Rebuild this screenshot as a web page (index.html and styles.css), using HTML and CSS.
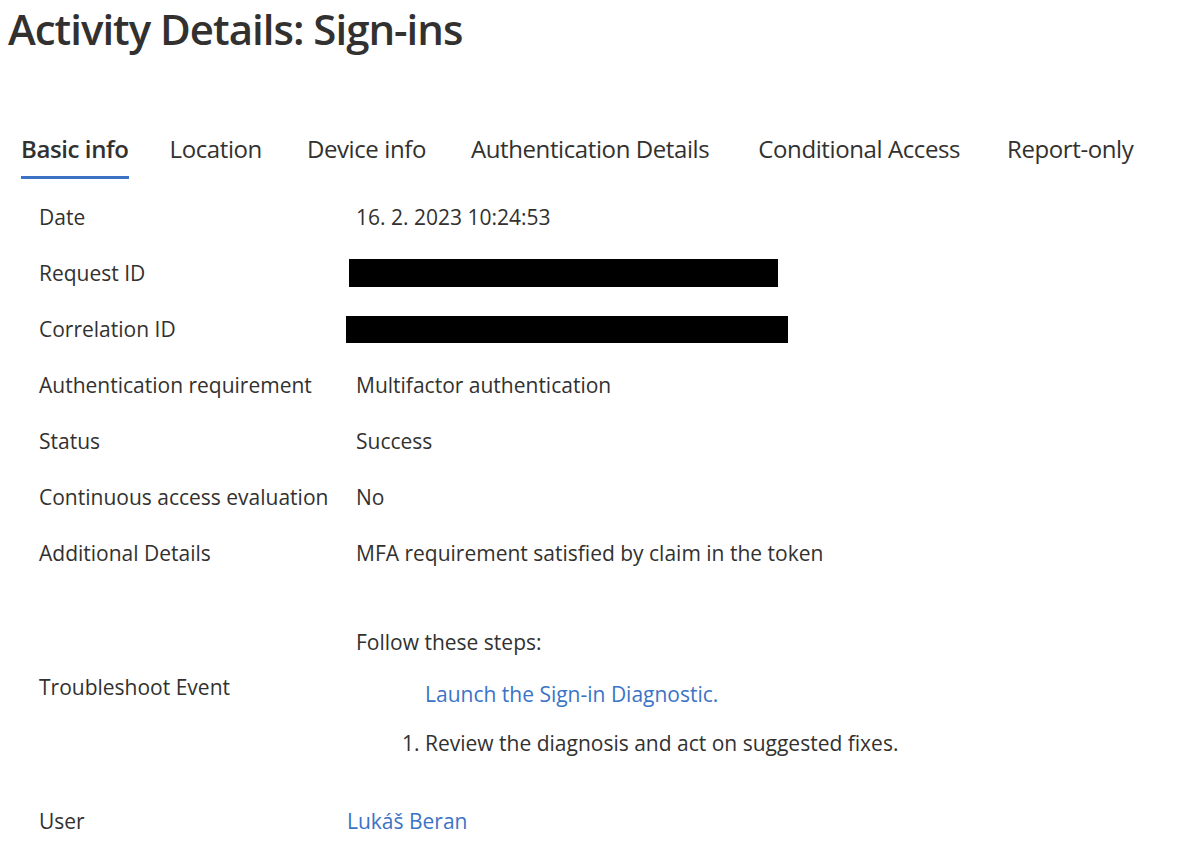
FILE: index.html
```html
<!DOCTYPE html>
<html lang="en">
<head>
<meta charset="utf-8">
<title>Activity Details: Sign-ins</title>
<link rel="stylesheet" href="styles.css">
</head>
<body>
<div class="page">
  <h1 class="title">Activity Details: Sign-ins</h1>
  <nav class="tabs">
    <span class="tab tab-basic active">Basic info</span>
    <span class="tab">Location</span>
    <span class="tab">Device info</span>
    <span class="tab tab-auth">Authentication Details</span>
    <span class="tab tab-cond">Conditional Access</span>
    <span class="tab">Report-only</span>
  </nav>
  <div class="details">
    <div class="row"><div class="label">Date</div><div class="value">16. 2. 2023 10:24:53</div></div>
    <div class="row"><div class="label">Request ID</div><div class="value"><span class="redact redact-req"></span></div></div>
    <div class="row"><div class="label">Correlation ID</div><div class="value"><span class="redact redact-corr"></span></div></div>
    <div class="row"><div class="label">Authentication requirement</div><div class="value">Multifactor authentication</div></div>
    <div class="row"><div class="label">Status</div><div class="value">Success</div></div>
    <div class="row"><div class="label">Continuous access evaluation</div><div class="value">No</div></div>
    <div class="row"><div class="label">Additional Details</div><div class="value">MFA requirement satisfied by claim in the token</div></div>
    <div class="row troubleshoot">
      <div class="label">Troubleshoot Event</div>
      <div class="value steps">
        <div class="steps-head">Follow these steps:</div>
        <a class="link launch" href="#">Launch the Sign-in Diagnostic.</a>
        <ol class="step-list"><li>Review the diagnosis and act on suggested fixes.</li></ol>
      </div>
    </div>
    <div class="row user-row"><div class="label">User</div><div class="value user"><a class="link" href="#">Lukáš Beran</a></div></div>
  </div>
</div>
</body>
</html>
```
FILE: styles.css
```css
html, body {
  margin: 0;
  padding: 0;
  background: #ffffff;
}
body {
  font-family: "Open Sans", "Noto Sans", sans-serif;
  color: #323130;
}
.page {
  padding: 0 0 0 8px;
}
.title {
  margin: 0;
  padding-top: 1px;
  font-size: 42px;
  font-weight: 600;
  line-height: 56px;
  letter-spacing: -1px;
  color: #323130;
}
.tabs {
  display: flex;
  gap: 45px;
  margin-top: 76px;
  padding-left: 13px;
  font-size: 24px;
}
.tab {
  line-height: 32px;
  padding-bottom: 11px;
  border-bottom: 3px solid transparent;
  letter-spacing: -0.4px;
}
.tab.active {
  font-weight: 600;
  border-bottom-color: #3b72c5;
}
.tab-basic {
  margin-right: -4px;
}
.tab-auth {
  margin-right: 4px;
}
.tab-cond {
  margin-right: 2px;
}
.details {
  padding-left: 31px;
  font-size: 21px;
}
.row {
  display: grid;
  grid-template-columns: 317px 1fr;
  align-items: center;
  height: 56px;
}
.row:first-child {
  margin-top: 10px;
}
.redact {
  display: block;
  background: #000;
}
.redact-req {
  width: 429px;
  height: 28px;
  margin-left: -7px;
}
.redact-corr {
  width: 442px;
  height: 27px;
  margin-left: -10px;
}
.troubleshoot {
  height: auto;
  margin-top: 47px;
  align-items: start;
}
.troubleshoot .label {
  padding-top: 45px;
}
.steps-head {
  line-height: 28px;
}
.link {
  color: #3b73c6;
  text-decoration: none;
}
.launch {
  display: block;
  margin-left: 69px;
  margin-top: 24px;
  line-height: 28px;
}
.step-list {
  margin: 21px 0 0 0;
  padding-left: 69px;
  line-height: 28px;
}
.user-row {
  margin-top: 36px;
}
.user {
  margin-left: -9px;
}
```
